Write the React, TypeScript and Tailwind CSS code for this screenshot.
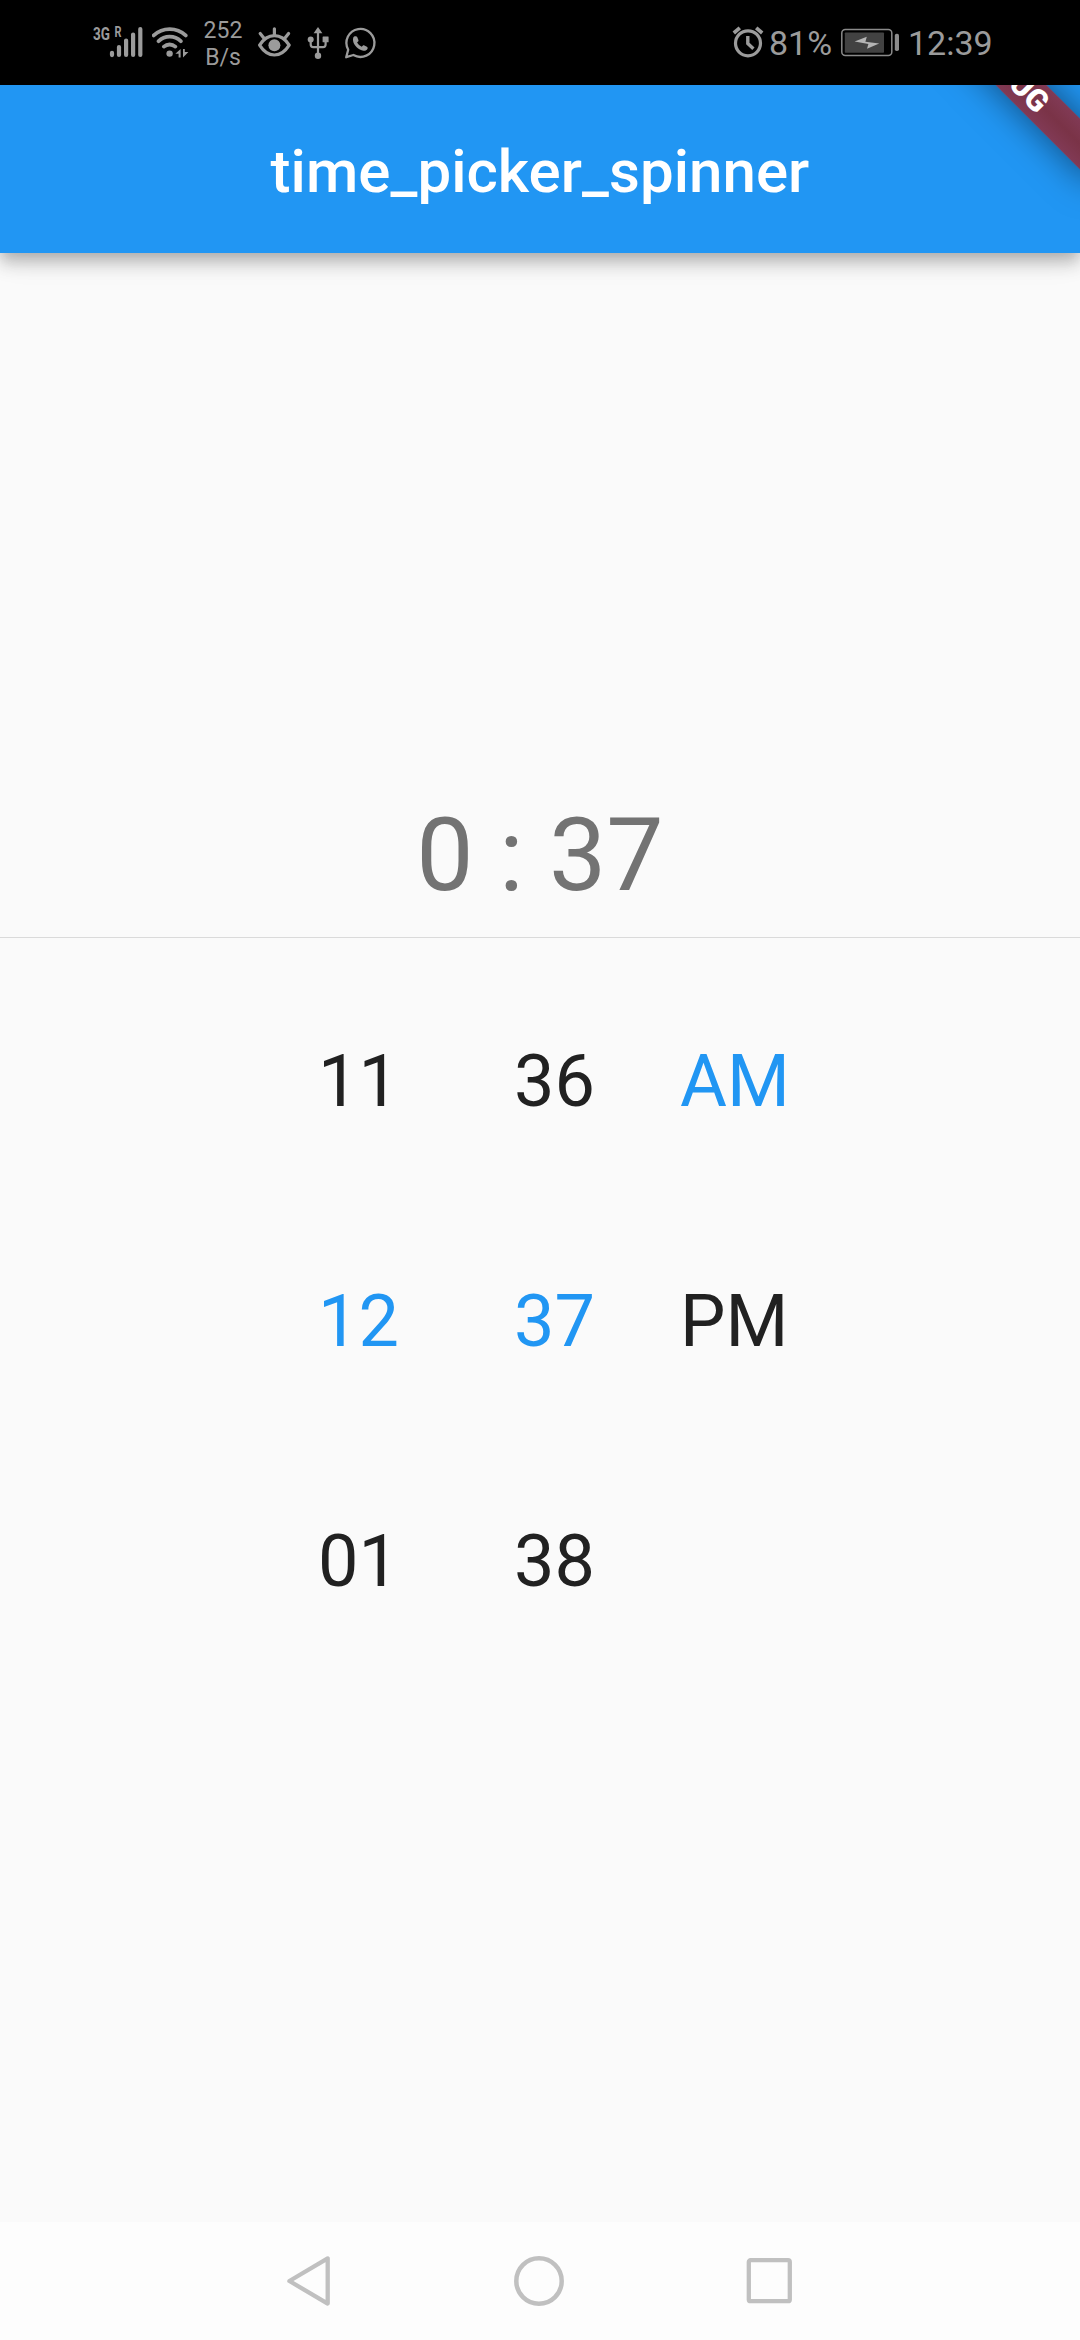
import React from "react";

const GREY = "#9b9b9b";

function SignalIcon() {
  return (
    <svg className="block h-[85px] w-[64px] shrink-0" viewBox="88 0 64 85" fill={GREY} stroke={GREY}>
      <g stroke="none" fontFamily="Roboto, sans-serif" fontWeight="700">
        <text x="93" y="40" fontSize="18" textLength="17" lengthAdjust="spacingAndGlyphs">3G</text>
        <text x="114.6" y="37.4" fontSize="14" textLength="7" lengthAdjust="spacingAndGlyphs">R</text>
      </g>
      <g fill="none" strokeWidth="4.2" strokeLinecap="round">
        <path d="M112 52.8v2.3M119 47v8M126.1 40.6V55M133.1 34.6V55M140.3 29V55" />
      </g>
    </svg>
  );
}

function WifiIcon() {
  return (
    <svg className="block h-[85px] w-[50px] shrink-0" viewBox="152 0 50 85" fill="none" stroke={GREY} strokeWidth="3.8" strokeLinecap="round">
      <path d="M153.7 35.4a23.5 23.5 0 0 1 32 0M158.6 41.2a16 16 0 0 1 22.2 0M163.9 46.6a8.8 8.8 0 0 1 11.4 0" />
      <circle cx="169.6" cy="53.6" r="3.2" fill={GREY} stroke="none" />
      <path d="M180.6 49v8.4h-2v-3.6h-3.2zM183 57.4V49h1.8v3h3.6z" fill={GREY} stroke="none" />
    </svg>
  );
}

function EyeIcon() {
  return (
    <svg className="block h-[85px] w-[50px] shrink-0" viewBox="250 0 50 85" fill="none" stroke={GREY} strokeWidth="3.2" strokeLinecap="round">
      <path d="M259.6 45.2c4-6.4 9-9.6 14.8-9.6s10.8 3.2 14.8 9.6c-4 6.4-9 9.8-14.8 9.8s-10.8-3.4-14.8-9.8z" strokeLinejoin="round" />
      <path d="M274.4 28.8v6M260.2 33.4l4 5.2M288.6 33.4l-4 5.2" />
      <circle cx="274.4" cy="45.2" r="6" fill={GREY} stroke="none" />
    </svg>
  );
}

function UsbIcon() {
  return (
    <svg className="block h-[85px] w-[34px] shrink-0" viewBox="300 0 34 85" fill="none" stroke={GREY} strokeWidth="2.2">
      <path d="M318 31v25M310.7 40v4.5q0 2.6 2.6 2.600H323q2.600 0 2.600-2.600V40" />
      <g fill={GREY} stroke="none">
        <path d="M318 27l4.4 6.3h-8.8z" />
        <circle cx="310.7" cy="39.5" r="3" />
        <rect x="322.6" y="36.5" width="6" height="5.8" rx="0.5" />
        <circle cx="318" cy="55.7" r="3.2" />
      </g>
    </svg>
  );
}

function WhatsAppIcon() {
  return (
    <svg className="block h-[85px] w-[44px] shrink-0" viewBox="334 0 44 85" fill="none" stroke={GREY} strokeWidth="2.3" strokeLinejoin="round">
      <path d="M346.2 57.2l2-7.5a14 14 0 1 1 5.200 5.300z" />
      <path
        d="M353.3 37.5c.6-1.5 3.2-1.9 4-.2l1.1 2.600c.3.8 0 1.400-.6 1.900l-.7.8c1.100 2 2.500 3.200 4.600 4.100l1-1c.5-.5 1.100-.6 1.700-.3l2.500 1.300c.8.5 1 1.200.6 2-.8 1.600-2.300 2.200-4 2-5-.7-9.700-5.200-10.400-9.700-.2-1.300-.2-2.500.2-3.500z"
        fill={GREY}
        stroke="none"
      />
    </svg>
  );
}

function AlarmIcon() {
  return (
    <svg className="ml-auto block h-[85px] w-[38px] shrink-0" viewBox="730 0 38 85" fill="none" stroke={GREY}>
      <circle cx="748" cy="43.3" r="12.5" strokeWidth="3.2" />
      <path d="M733.8 33l6-5.200M762.200 33l-6-5.200" strokeWidth="3.7" />
      <path d="M747.8 36v7.600l5.600 5.200" strokeWidth="3.4" />
    </svg>
  );
}

function BatteryIcon() {
  return (
    <svg className="block h-[85px] w-[70px] shrink-0" viewBox="838 0 70 85" fill="none">
      <rect x="841.8" y="29.4" width="50" height="26.2" rx="3.5" stroke="#8a8a8a" strokeWidth="1.5" />
      <rect x="844.8" y="32.4" width="39.2" height="20.4" rx="0.8" fill="#424242" />
      <path d="M854.6 41.6l12.200-4.800-1.400 4.900 13.800 1.900-12.200 5.200 1.400-4.900z" fill="#b4b4b4" />
      <rect x="894.8" y="33.7" width="4.2" height="17.4" rx="1.8" fill="#8c8c8c" />
    </svg>
  );
}

function StatusBar() {
  return (
    <div className="flex h-[85px] shrink-0 items-start bg-black pl-[88px] pr-[87px] text-[#9b9b9b]">
      <SignalIcon />
      <WifiIcon />
      <div className="flex w-[48px] shrink-0 flex-col items-center pt-[17px] pr-[6px] text-[23px] leading-[27px]">
        <span>252</span>
        <span>B/s</span>
      </div>
      <EyeIcon />
      <UsbIcon />
      <WhatsAppIcon />
      <AlarmIcon />
      <span className="w-[70px] shrink-0 pl-[1px] text-[34px] leading-[87px]">81%</span>
      <BatteryIcon />
      <span className="w-[85px] shrink-0 text-[34px] leading-[87px]">12:39</span>
    </div>
  );
}

function AppBar() {
  return (
    <header className="relative z-10 h-[168px] shrink-0 bg-[#2196f3] shadow-[0_6px_12px_-3px_rgba(0,0,0,0.14),0_12px_15px_0_rgba(0,0,0,0.14),0_3px_30px_0_rgba(0,0,0,0.12)]">
      <h1 className="pt-[3px] text-center text-[60px] font-medium leading-[168px] tracking-[0.05px] text-white">time_picker_spinner</h1>
      <div className="absolute inset-0 overflow-hidden">
        <div className="absolute -top-[31px] left-[868px] flex h-[36px] w-[280px] rotate-45 items-center justify-center bg-[linear-gradient(#813a55,#7a3347_50%,#813a55)] pl-[3px] text-[30.6px] font-black leading-none text-white shadow-[0_0_36px_rgba(0,0,0,0.5)]">
          DEBUG
        </div>
      </div>
    </header>
  );
}

type Item = { label: string; selected?: boolean };

function Spinner({ items, className }: { items: Item[]; className: string }) {
  return (
    <ul className={className}>
      {items.map((item) => (
        <li
          key={item.label}
          className={
            item.selected
              ? "h-[240px] text-[72px] leading-[240px] text-[#2196f3]"
              : "h-[240px] text-[72px] leading-[240px] text-[#212121]"
          }
        >
          {item.label}
        </li>
      ))}
    </ul>
  );
}

function NavBar() {
  return (
    <nav className="flex h-[118px] shrink-0 items-center justify-between bg-[#fdfdfd] pl-[285px] pr-[286px]">
      <svg className="block h-[52px] w-[46px]" viewBox="0 0 46 52" fill="none" stroke="#c0c0c0" strokeWidth="4.3" strokeLinejoin="round">
        <path d="M42.7 3.4v45.2L4.4 26z" />
      </svg>
      <svg className="block h-[52px] w-[52px]" viewBox="0 0 52 52" fill="none" stroke="#c0c0c0" strokeWidth="4.5">
        <circle cx="26" cy="26" r="22.7" />
      </svg>
      <svg className="block h-[52px] w-[48px]" viewBox="0 0 48 52" fill="none" stroke="#c0c0c0" strokeWidth="4.3">
        <rect x="2.8" y="5.2" width="41" height="41" rx="1.8" />
      </svg>
    </nav>
  );
}

export default function App() {
  return (
    <div className="flex h-[2340px] w-[1080px] flex-col overflow-hidden bg-[#fafafa] font-[Roboto,sans-serif]">
      <StatusBar />
      <AppBar />
      <main className="flex min-h-0 flex-1 flex-col">
        <div className="mt-[542px] text-center text-[102px] leading-[120px] text-[#737373]">0 : 37</div>
        <div className="mt-[22px] h-px shrink-0 bg-[#dadada]" />
        <div className="mt-[24px] flex pl-[318px]">
          <Spinner className="w-[196px]" items={[{ label: "11" }, { label: "12", selected: true }, { label: "01" }]} />
          <Spinner className="w-[166px]" items={[{ label: "36" }, { label: "37", selected: true }, { label: "38" }]} />
          <Spinner className="w-[180px]" items={[{ label: "AM", selected: true }, { label: "PM" }]} />
        </div>
      </main>
      <NavBar />
    </div>
  );
}
